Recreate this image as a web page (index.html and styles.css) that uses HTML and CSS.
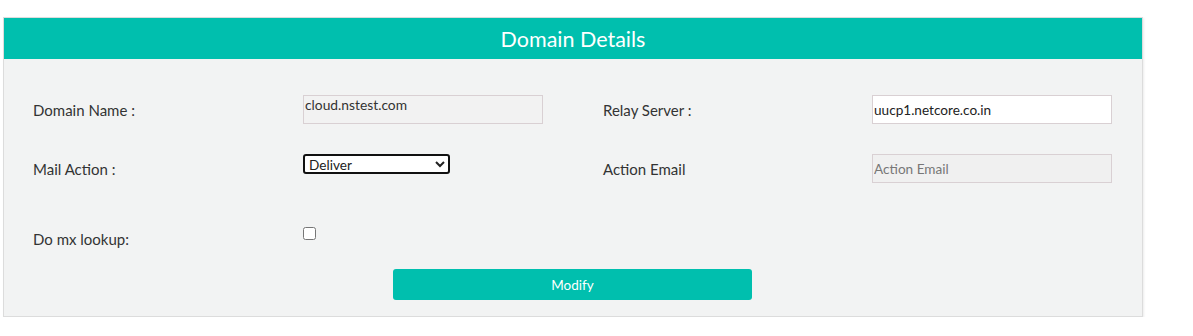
FILE: index.html
```html
<!DOCTYPE html>
<html>
<head>
<meta charset="utf-8">
<link rel="stylesheet" href="styles.css">
</head>
<body>
<div class="card">
  <div class="card-head">Domain Details</div>
  <div class="card-body">
    <div class="row row-1">
      <label class="lbl">Domain Name :</label>
      <div class="field"><div class="ro-box">cloud.nstest.com</div></div>
      <label class="lbl">Relay Server :</label>
      <div class="field"><input class="txt" type="text" value="uucp1.netcore.co.in"></div>
    </div>
    <div class="row row-2">
      <label class="lbl">Mail Action :</label>
      <div class="field field-top">
        <select class="sel"><option>Deliver</option></select>
      </div>
      <label class="lbl">Action Email</label>
      <div class="field"><input class="txt txt-disabled" type="text" placeholder="Action Email" disabled></div>
    </div>
    <div class="row row-3">
      <label class="lbl">Do mx lookup:</label>
      <div class="field field-top"><input class="chk" type="checkbox"></div>
    </div>
    <div class="actions">
      <button class="btn" type="button">Modify</button>
    </div>
  </div>
</div>
</body>
</html>
```
FILE: styles.css
```css
* { box-sizing: border-box; }
html, body { margin: 0; padding: 0; background: #fff; }
body {
  font-family: Lato, "Open Sans", sans-serif;
  color: #333;
  padding: 17px 0 0 3px;
}
.card {
  width: 1140px;
  border: 1px solid #dcdcdc;
  background: #f2f3f3;
  box-shadow: 1px 1px 2px rgba(0,0,0,0.08);
}
.card-head {
  background: #00bfae;
  color: #fff;
  height: 41px;
  font-size: 21.5px;
  display: flex;
  align-items: center;
  justify-content: center;
}
.card-body {
  padding: 36px 0 16px 29px;
  display: flex;
  flex-direction: column;
}
.row {
  display: grid;
  grid-template-columns: 270px 300px 269px 240px;
  align-items: center;
  height: 29px;
}
.row-1 { margin-bottom: 30px; }
.row-2 { margin-bottom: 41px; }
.lbl {
  font-size: 15px;
  color: #333;
}
.field { height: 29px; display: flex; align-items: center; }
.field-top { align-items: flex-start; }
.ro-box {
  width: 240px;
  height: 29px;
  border: 1px solid #d9d0d3;
  background: #f2f2f2;
  font-size: 13.8px;
  line-height: 17px;
  padding: 0 0 0 1px;
  color: #333;
  font-family: Lato, "Open Sans", sans-serif;
}
.txt {
  width: 240px;
  height: 29px;
  border: 1px solid #d9d0d3;
  background: #fff;
  font-size: 13.6px;
  font-family: Lato, "Open Sans", sans-serif;
  color: #222;
  padding: 0 1px;
  margin: 0;
  outline: none;
}
.txt-disabled { background: #f0f0f0; }
.txt-disabled::placeholder { color: #777; }
.sel {
  width: 147px;
  height: 20px;
  border: 2px solid #111;
  border-radius: 3px;
  background: #fff;
  font-size: 13.6px;
  font-family: Lato, "Open Sans", sans-serif;
  color: #222;
  padding: 0;
  margin: 0;
}
.chk {
  width: 13px;
  height: 13px;
  margin: 3px 0 0 0;
}
.actions {
  display: flex;
  margin-top: 16px;
  padding-left: 360px;
}
.btn {
  width: 359px;
  height: 31px;
  border: none;
  border-radius: 3px;
  background: #00bfae;
  color: #fff;
  font-family: Lato, "Open Sans", sans-serif;
  font-size: 13.5px;
  padding: 0;
}
```
